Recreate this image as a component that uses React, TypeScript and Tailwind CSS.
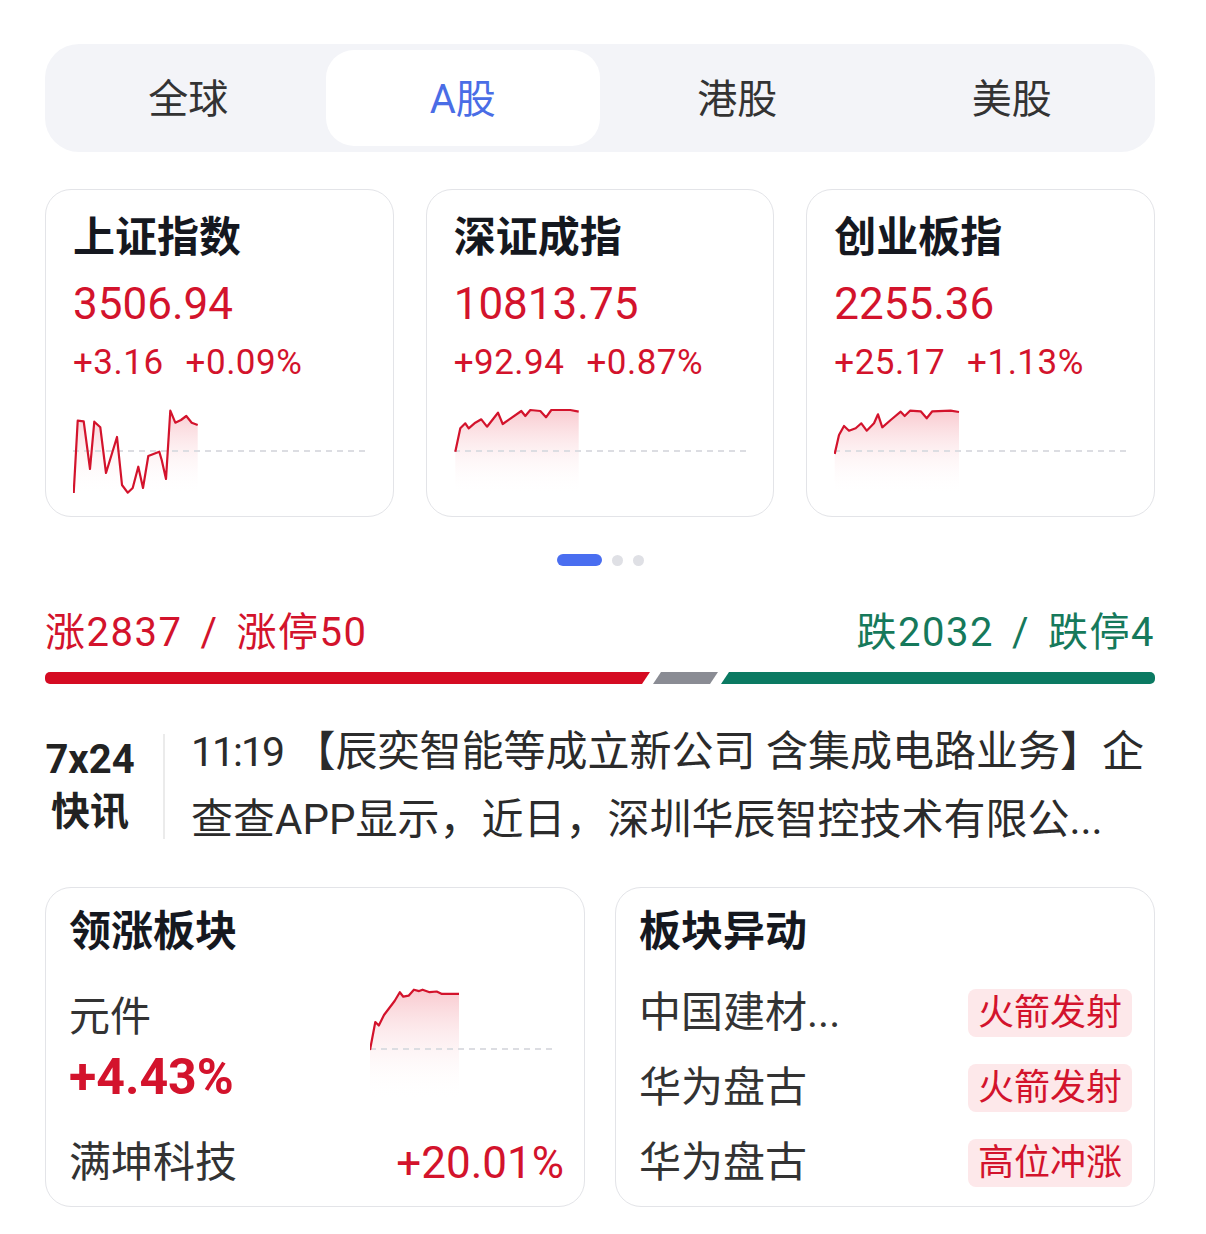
import React from 'react';

const indices = [
  {
    name: '上证指数',
    value: '3506.94',
    change: '+3.16',
    pct: '+0.09%',
    pts: '0.7,88 4.7,15.7 10.7,16.3 17,64 21.3,16.7 27.3,22.3 33,68 44,32 49,80 54.7,87.7 59.7,83 65.3,61.7 70,83 75.3,51 86.3,46.7 88.7,55 93,74 97.3,5.7 102.3,17.7 108,15 113.3,11 118.7,17.7 124.7,20',
  },
  {
    name: '深证成指',
    value: '10813.75',
    change: '+92.94',
    pct: '+0.87%',
    pts: '1.3,46.7 6.3,23.3 11.3,18.3 14.7,23.3 21.3,17.7 27.3,14.3 33,21.7 44,7.7 48.7,19 55.3,14.3 67.3,6 71.3,11 76.3,5 86.3,6 92,12.3 97.3,5 116.3,5 124.7,6.7',
  },
  {
    name: '创业板指',
    value: '2255.36',
    change: '+25.17',
    pct: '+1.13%',
    pts: '0.7,49 5,30 10,21 15,25.7 21.7,23.3 27.3,18.3 32.7,25.7 40,18.3 44,9.3 48.3,22.3 56.7,15 66.7,6.7 70.7,11 76,5.7 86.7,6.3 92.7,13.3 98.3,6.3 116.7,5.7 125,7',
  },
];

const moves = [
  { name: '中国建材...', tag: '火箭发射' },
  { name: '华为盘古', tag: '火箭发射' },
  { name: '华为盘古', tag: '高位冲涨' },
];

function Spark({ id, pts, w, h, base }: { id: string; pts: string; w: number; h: number; base: number }) {
  const list = pts.split(' ').map((p) => p.split(',').map(Number));
  const first = list[0];
  const last = list[list.length - 1];
  const area = `${pts} ${last[0]},${h} ${first[0]},${h}`;
  return (
    <svg width={w} height={h} viewBox={`0 0 ${w} ${h}`} className="block">
      <defs>
        <linearGradient id={id} x1="0" y1="0" x2="0" y2="1">
          <stop offset="0%" stopColor="#f7b9c0" stopOpacity="0.75" />
          <stop offset="100%" stopColor="#ffffff" stopOpacity="0" />
        </linearGradient>
      </defs>
      <polygon points={area} fill={`url(#${id})`} />
      <line x1="0" y1={base} x2={w} y2={base} stroke="#dcdde2" strokeWidth="2" strokeDasharray="6 5" />
      <polyline points={pts} fill="none" stroke="#d3132c" strokeWidth="2.2" strokeLinejoin="round" />
    </svg>
  );
}

export default function App() {
  return (
    <div className="min-h-[1234px] bg-white pl-[45px] pr-[51px] pt-[44px] font-['Roboto','Noto_Sans_CJK_SC',sans-serif] text-[#333]">
      {/* market tabs */}
      <div className="grid h-[108px] grid-cols-4 rounded-[34px] bg-[#f3f4f8] p-[6px] text-[40px]">
        {['全球', 'A股', '港股', '美股'].map((t) => (
          <div
            key={t}
            className={
              t === 'A股'
                ? 'flex items-center justify-center rounded-[28px] bg-white pt-[3px] text-[#4a6de6]'
                : 'flex items-center justify-center pt-[3px] text-[#333]'
            }
          >
            {t}
          </div>
        ))}
      </div>

      {/* index cards */}
      <div className="mt-[37px] grid grid-cols-3 gap-[32px]">
        {indices.map((it, i) => (
          <div key={it.name} className="h-[328px] rounded-[26px] border border-[#e3e4e8] pl-[27px] pt-[24px]">
            <div className="text-[42px] font-semibold leading-[48px] text-[#15181f]">{it.name}</div>
            <div className="mt-[16px] text-[44px] leading-[52px] text-[#d3132c]">{it.value}</div>
            <div className="mt-[13px] flex gap-[22px] text-[35px] leading-[40px] tracking-[0.5px] text-[#d3132c]">
              <span>{it.change}</span>
              <span>{it.pct}</span>
            </div>
            <div className="mt-[22px]">
              <Spark id={`g${i}`} pts={it.pts} w={296} h={90} base={46} />
            </div>
          </div>
        ))}
      </div>

      {/* pager dots */}
      <div className="mt-[37px] flex items-center justify-center gap-[10px]">
        <div className="h-[12px] w-[45px] rounded-full bg-[#4a6ef0]" />
        <div className="h-[11px] w-[11px] rounded-full bg-[#dfe0e5]" />
        <div className="h-[11px] w-[11px] rounded-full bg-[#dfe0e5]" />
      </div>

      {/* rise / fall */}
      <div className="mt-[43px] flex justify-between text-[40px] leading-[48px] tracking-[1.5px]">
        <div className="flex gap-[18px] text-[#d3132c]">
          <span>涨2837</span>
          <span>/</span>
          <span>涨停50</span>
        </div>
        <div className="flex gap-[18px] text-[#16795b]">
          <span>跌2032</span>
          <span>/</span>
          <span>跌停4</span>
        </div>
      </div>
      <div className="mt-[15px] flex h-[12px] gap-[3px]">
        <div className="w-[605px] rounded-l-[5px] bg-[#d50b22] [clip-path:polygon(0_0,100%_0,calc(100%_-_8px)_100%,0_100%)]" />
        <div className="w-[65px] bg-[#8a8c94] [clip-path:polygon(8px_0,100%_0,calc(100%_-_8px)_100%,0_100%)]" />
        <div className="flex-1 rounded-r-[5px] bg-[#0b7a62] [clip-path:polygon(8px_0,100%_0,100%_100%,0_100%)]" />
      </div>

      {/* 7x24 news */}
      <div className="mt-[34px] flex items-center">
        <div className="flex w-[90px] flex-col items-center font-bold text-[#222]">
          <span className="text-[40px] leading-[52px]">7x24</span>
          <span className="text-[39px] leading-[52px]">快讯</span>
        </div>
        <div className="ml-[28px] h-[105px] w-[2px] bg-[#ebebeb]" />
        <div className="ml-[26px] flex-1 overflow-hidden whitespace-nowrap text-[42px] leading-[68px] text-[#2b2b2b]">
          <div>
            <span className="text-[41px] tracking-[-2px]">11:19</span> 【辰奕智能等成立新公司 含集成电路业务】企
          </div>
          <div>查查APP显示，近日，深圳华辰智控技术有限公...</div>
        </div>
      </div>

      {/* bottom cards */}
      <div className="mt-[33px] grid grid-cols-2 gap-[30px]">
        <div className="h-[320px] rounded-[26px] border border-[#e3e4e8] pl-[23px] pr-[20px] pt-[20px]">
          <div className="text-[42px] font-semibold leading-[48px] text-[#15181f]">领涨板块</div>
          <div className="mt-[29px] flex">
            <div className="w-[301px] pt-[6px]">
              <div className="text-[41px] leading-[52px] text-[#333]">元件</div>
              <div className="mt-[4px] text-[50px] font-bold leading-[60px] text-[#d3132c]">+4.43%</div>
            </div>
            <Spark id="g9" pts="0,65 5.3,37 8.8,40.5 14,30 24.6,16 29.8,7.2 33.3,11.7 38.6,10.7 43.9,4.7 49.1,6.1 52.6,4.7 59.6,7.2 66.7,6.5 71.9,8.9 89,8.9" w={186} h={115} base={64} />
          </div>
          <div className="mt-[30px] flex items-center justify-between leading-[52px]">
            <span className="text-[42px] text-[#333]">满坤科技</span>
            <span className="text-[44px] text-[#d3132c]">+20.01%</span>
          </div>
        </div>

        <div className="h-[320px] rounded-[26px] border border-[#e3e4e8] pl-[23px] pr-[22px] pt-[20px]">
          <div className="text-[42px] font-semibold leading-[48px] text-[#15181f]">板块异动</div>
          <div className="mt-[19px]">
            {moves.map((m, i) => (
              <div key={i} className="flex h-[75px] items-center justify-between">
                <span className="text-[42px] text-[#333]">{m.name}</span>
                <span className="rounded-[8px] bg-[#fde8ea] px-[10px] text-[36px] leading-[48px] text-[#d3132c]">
                  {m.tag}
                </span>
              </div>
            ))}
          </div>
        </div>
      </div>
    </div>
  );
}
